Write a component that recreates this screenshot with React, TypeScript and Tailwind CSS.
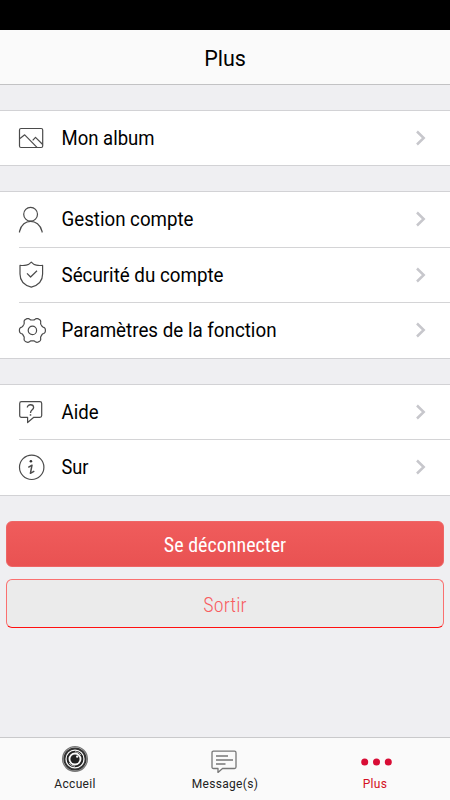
import type { ReactNode } from "react";

interface RowProps {
  icon: ReactNode;
  label: string;
  width: string;
  last?: boolean;
  className?: string;
}

function LineIcon({ children }: { children: ReactNode }) {
  return (
    <svg
      className="w-[30px] h-[30px] mt-3 ml-[18px] shrink-0"
      viewBox="0 0 30 30"
      fill="none"
      stroke="#4b4b4b"
      strokeWidth="1.2"
      strokeLinejoin="round"
    >
      {children}
    </svg>
  );
}

const albumIcon = (
  <LineIcon>
    <rect x="1.5" y="5.5" width="23.2" height="19" rx="1.5" />
    <path d="M2 15.5 6.7 11.8 19 24.3M14.7 17.3 17.5 14.3 24.7 21.5" />
  </LineIcon>
);

const userIcon = (
  <LineIcon>
    <circle cx="12.6" cy="10.2" r="6.9" />
    <path d="M1.5 28.5V27.5C3 20.5 8 17.3 12.6 17.3S22.5 20.5 24.1 27.5V28.5" />
  </LineIcon>
);

const shieldIcon = (
  <LineIcon>
    <path d="M13.3 2.2C11.5 4.2 10 4.9 8.3 5.2 6 5.6 4 5.6 2 5.3V14C2 21 7 25.5 13.3 27.2 19.6 25.5 24.6 21 24.6 14V5.3C22.6 5.6 20.6 5.6 18.3 5.2 16.6 4.9 15.1 4.2 13.3 2.2Z" />
    <path d="M9 13.3 12.6 17 19 10.7" />
  </LineIcon>
);

// six soft lobes around the hub
const gearPoints = Array.from({ length: 120 }, (_, i) => {
  const a = (i * Math.PI) / 60;
  const r = 11.7 + 1.35 * Math.tanh(1.8 * Math.cos(6 * a));
  return `${(14.4 + r * Math.cos(a)).toFixed(2)},${(15.4 + r * Math.sin(a)).toFixed(2)}`;
}).join(" ");

const gearIcon = (
  <LineIcon>
    <polygon points={gearPoints} />
    <circle cx="14.4" cy="15.4" r="4.2" />
  </LineIcon>
);

const helpIcon = (
  <LineIcon>
    <path d="M3.5 4.7H21.8Q23.7 4.7 23.7 6.5V18.5Q23.7 20.3 21.8 20.3H15.8L9.6 25.5V20.3H3.5Q1.7 20.3 1.7 18.5V6.5Q1.7 4.7 3.5 4.7Z" />
    <path d="M9.3 10.5C9.3 6.8 15.6 6.8 15.6 10.5 15.6 12.8 12.5 13 12.5 16" strokeWidth="1.3" />
    <path d="M12.5 17.2V18.7" strokeWidth="1.5" />
  </LineIcon>
);

const infoIcon = (
  <LineIcon>
    <circle cx="13.7" cy="15.3" r="12.2" />
    <circle cx="12.9" cy="9.3" r="1.3" fill="#333" stroke="none" />
    <path d="M10.3 15.3 14 13.2 12.4 21.3 16.3 19.2" strokeWidth="1.5" />
  </LineIcon>
);

function Row({ icon, label, width, last, className = "h-[55px]" }: RowProps) {
  return (
    <div>
      <div className={`flex items-start ${className}`}>
        {icon}
        <svg className="w-[300px] h-[30px] mt-3 ml-[13px] overflow-visible">
          <text x="0.5" y="22.3" fontSize="19.5" fontWeight="385" textLength={width} lengthAdjust="spacingAndGlyphs" fill="#000">
            {label}
          </text>
        </svg>
        <svg className="w-3 h-4 mt-[19px] ml-auto mr-[23px]" viewBox="0 0 12 16" fill="none">
          <path d="M2 1.5 8.7 8 2 14.5" stroke="#c7c7cc" strokeWidth="2.5" />
        </svg>
      </div>
      {!last && <div className="ml-[19px] h-px bg-[#d4d4d6]" />}
    </div>
  );
}

function Group({ children }: { children: ReactNode }) {
  return <section className="bg-white border-y border-[#d2d2d5]">{children}</section>;
}

export default function App() {
  return (
    <div className="w-[450px] h-[800px] flex flex-col bg-[#efeff2] overflow-hidden font-['Roboto',sans-serif] text-black">
      <div className="h-[30px] bg-black shrink-0" />
      <header className="h-[55px] shrink-0 bg-[#fafafa] border-b border-[#c2c2c4] flex items-center justify-center text-[21.5px] font-[380] pt-[4px]">
        Plus
      </header>

      <main className="flex-1 pt-[25px]">
        <Group>
          <Row icon={albumIcon} label="Mon album" width="93" className="h-[54px]" last />
        </Group>
        <div className="h-[25px]" />
        <Group>
          <Row icon={userIcon} label="Gestion compte" width="132" />
          <Row icon={shieldIcon} label="Sécurité du compte" width="162" className="h-[54px]" />
          <Row icon={gearIcon} label="Paramètres de la fonction" width="215" last />
        </Group>
        <div className="h-[25px]" />
        <Group>
          <Row icon={helpIcon} label="Aide" width="37" className="h-[54px]" />
          <Row icon={infoIcon} label="Sur" width="27" last />
        </Group>

        <div className="px-[6px] pt-[25px] flex flex-col gap-3">
          <button className="h-[46px] rounded-md bg-linear-to-b from-[#f05c5c] to-[#e95252] border border-[#ee6666] text-white text-[20px] font-[370] flex items-center justify-center font-['Roboto_Condensed','Roboto',sans-serif] [font-stretch:75%] pt-[2px]">
            Se déconnecter
          </button>
          <button className="h-[49px] rounded-md bg-[#ebebeb] border border-[#fa7070] border-b-[#ff1010] text-[#f85c5f] text-[20px] font-[350] flex items-center justify-center font-['Roboto_Condensed','Roboto',sans-serif] [font-stretch:75%] tracking-[0.1px] pt-[2px]">
            Sortir
          </button>
        </div>
      </main>

      <nav className="h-[63px] shrink-0 border-t border-[#c9c9cb] bg-[#fafafa] grid grid-cols-3 text-[12px] font-[370] tracking-[0.3px] text-[#222]">
        <div className="flex flex-col items-center">
          <svg className="w-7 h-7 mt-[7px]" viewBox="0 0 28 28" fill="none">
            <circle cx="14" cy="14" r="12.4" stroke="#777" strokeWidth="1.3" />
            <circle cx="14" cy="14" r="10.6" stroke="#333" strokeWidth="2" />
            <circle cx="14" cy="14" r="7.4" stroke="#222" strokeWidth="1.9" />
            <circle cx="14" cy="14" r="4.6" fill="#222" />
            <circle cx="16.2" cy="11.6" r="1.2" fill="#fafafa" />
            <path d="M14 6.7A7.3 7.3 0 0 1 20 10M14 21.3A7.3 7.3 0 0 1 8 18" stroke="#fafafa" strokeWidth="0.7" />
          </svg>
          <span className="mt-[2px]">Accueil</span>
        </div>
        <div className="flex flex-col items-center">
          <svg className="w-7 h-7 mt-[7px]" viewBox="0 0 28 28" fill="none" stroke="#777" strokeWidth="1.3">
            <path d="M2 6.2H23.500Q25 6.200 25 7.700V22Q25 23.500 23.500 23.500H11.500L7 27.500V23.500H2.500Q1 23.500 1 22V7.700Q1 6.200 2.500 6.200Z" strokeLinejoin="round" />
            <path d="M5 11H17M5 15H22M5 19H14.5" />
          </svg>
          <span className="mt-[2px]">Message(s)</span>
        </div>
        <div className="flex flex-col items-center text-[#d40f22]">
          <svg className="w-8 h-7 mt-[7px] overflow-visible" viewBox="0 0 32 28" fill="#d80c35">
            <circle cx="5.7" cy="17" r="3.5" />
            <circle cx="17.5" cy="17" r="3.5" />
            <circle cx="29.3" cy="17" r="3.5" />
          </svg>
          <span className="mt-[2px]">Plus</span>
        </div>
      </nav>
    </div>
  );
}
